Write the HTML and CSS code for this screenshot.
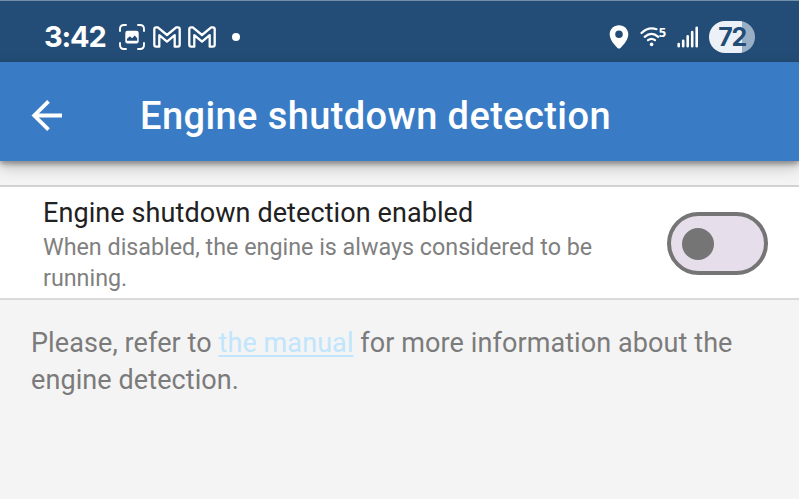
FILE: index.html
```html
<!DOCTYPE html>
<html lang="en">
<head>
<meta charset="utf-8">
<title>Engine shutdown detection</title>
<link rel="stylesheet" href="styles.css">
</head>
<body>
<div class="screen">
  <div class="status">
    <span class="clock">3:42</span>
    <svg class="ico-shot" width="26" height="26" viewBox="0 0 26 26" fill="none">
      <path d="M1 7V5Q1 1 5 1H7M19 1H21Q25 1 25 5V7M25 19V21Q25 25 21 25H19M7 25H5Q1 25 1 21V19" stroke="#fff" stroke-width="1.9" stroke-linecap="round"/>
      <rect x="6.3" y="6.8" width="13.4" height="12.6" rx="2.2" fill="#fff"/>
      <path d="M8 16.800V14.800L11 12.300L13 14.300L15.800 11.600L18.200 14.300V16.800Z" fill="#234d76"/>
    </svg>
    <svg class="ico-mail" width="28" height="22" viewBox="0 0 28 22">
      <path d="M1.300 18.800V3.200Q1.300 1.300 3.200 1.300H4.800L14 9L23.200 1.300H24.800Q26.700 1.300 26.700 3.200V18.800Q26.700 20.700 24.800 20.700H21.700V9.200L14 15.600L6.300 9.200V20.700H3.200Q1.300 20.700 1.300 18.800Z"/>
    </svg>
    <svg class="ico-mail" width="28" height="22" viewBox="0 0 28 22">
      <path d="M1.300 18.800V3.200Q1.300 1.300 3.200 1.300H4.800L14 9L23.200 1.300H24.800Q26.700 1.300 26.700 3.200V18.800Q26.700 20.700 24.800 20.700H21.700V9.200L14 15.600L6.300 9.200V20.700H3.200Q1.300 20.700 1.300 18.800Z"/>
    </svg>
    <span class="dot"></span>
    <svg class="ico-pin" width="20" height="24" viewBox="0 0 20 24">
      <path fill="#fff" fill-rule="evenodd" d="M10 .3C4.800 .3 .7 4.200 .7 9.300C.7 14.500 5 19.500 8.500 22.900Q10 24 11.500 22.900C15 19.500 19.300 14.500 19.300 9.300C19.300 4.200 15.200 .3 10 .3ZM10 5.500A3.800 3.800 0 1 1 10 13.100A3.800 3.800 0 1 1 10 5.500Z"/>
    </svg>
    <svg class="ico-wifi" width="28" height="22" viewBox="0 0 28 22" fill="none">
      <path d="M1.500 7Q8.500 .3 16.500 3.200M4.700 10.800Q11.500 5 18.300 10.800M8 14.200Q11.500 11.400 15 14.200" stroke="#fff" stroke-width="2.200" stroke-linecap="round"/>
      <circle cx="11.600" cy="18.400" r="1.800" fill="#fff"/>
      <text class="wifi-gen" x="18.800" y="11">5</text>
    </svg>
    <svg class="ico-signal" width="22" height="22" viewBox="0 0 22 22" stroke="#fff" stroke-width="2.600" stroke-linecap="round">
      <path d="M1.700 18V20.300M6.200 14.700V20.300M10.700 10.300V20.300M15.200 6V20.300M19.700 1.700V20.300"/>
    </svg>
    <span class="battery">72</span>
  </div>
  <header class="bar">
    <svg class="back" width="32" height="32" viewBox="0 0 32 32" fill="none" stroke="#fff" stroke-width="3.800">
      <path d="M31 15.500H3M17.500 1.300L3.200 15.500L17.500 29.700"/>
    </svg>
    <h1 class="title">Engine shutdown detection</h1>
  </header>
  <main class="content">
    <section class="setting">
      <div class="copy">
        <div class="name">Engine shutdown detection enabled</div>
        <div class="summary">When disabled, the engine is always considered to be<br>running.</div>
      </div>
      <div class="switch"><span class="thumb"></span></div>
    </section>
    <p class="note">Please, refer to <a class="link">the manual</a> for more information about the<br>engine detection.</p>
  </main>
</div>
</body>
</html>
```
FILE: styles.css
```css
* { box-sizing: border-box; }
body { margin: 0; background: #fff; font-family: Roboto, sans-serif; }
.screen { width: 799px; height: 499px; background: #f4f4f4; overflow: hidden; }
svg { display: block; flex: none; overflow: visible; }
.status { height: 62px; background: #234d76; border-top: 1px solid #7590aa; display: flex; align-items: center; padding: 11px 44px 0 44px; color: #fff; }
.clock { width: 75px; font: 700 29px/40px Inter, sans-serif; letter-spacing: -1.2px; white-space: nowrap; }
.ico-mail { margin-left: 8px; fill: none; stroke: #fff; stroke-width: 2.3; stroke-linejoin: round; }
.ico-mail + .ico-mail { margin-left: 7px; }
.dot { width: 8px; height: 8px; border-radius: 50%; background: #fff; margin-left: 16px; }
.ico-pin { margin-left: auto; }
.ico-wifi { margin-left: 11px; }
.wifi-gen { font: 700 13px "Open Sans", sans-serif; fill: #fff; }
.ico-signal { margin-left: 9px; }
.battery { width: 46px; height: 32px; margin-left: 10px; border-radius: 16px; background: linear-gradient(90deg, #ecf1f8 33px, #98aec5 33px); color: #234d76; font: 700 25px/32px Inter, sans-serif; text-align: center; letter-spacing: -1.5px; }
.bar { position: relative; z-index: 1; height: 99px; background: #397cc5; box-shadow: 0 3px 5px rgba(0,0,0,.32), 0 6px 14px rgba(0,0,0,.22); display: flex; align-items: center; padding: 8px 31px 0; }
.back { margin-right: 77px; }
.title { margin: 0; padding-top: 1px; font-size: 38px; line-height: 46px; font-weight: 500; letter-spacing: .41px; color: #fff; white-space: nowrap; }
.content { padding-top: 24px; }
.setting { height: 115px; background: #fff; border-top: 2px solid #d2d2d2; border-bottom: 2px solid #dadada; display: flex; justify-content: space-between; padding: 9px 31px 0 43px; }
.name { font-size: 27px; line-height: 34px; letter-spacing: .09px; color: #212121; white-space: nowrap; }
.summary { padding-top: 2px; font-size: 23.300px; line-height: 31px; color: #808080; white-space: nowrap; }
.switch { width: 101px; height: 63px; margin-top: 16px; border: 4px solid #757575; border-radius: 32px; background: #e6deea; display: flex; align-items: center; padding-left: 11px; }
.thumb { width: 32px; height: 32px; border-radius: 50%; background: #757575; }
.note { margin: 25px 0 0 31px; font-size: 27px; line-height: 37px; letter-spacing: .09px; color: #7b7b7b; white-space: nowrap; }
.link { color: #c0e5fc; text-decoration: underline; text-decoration-thickness: 2px; text-underline-offset: 3px; }
```
